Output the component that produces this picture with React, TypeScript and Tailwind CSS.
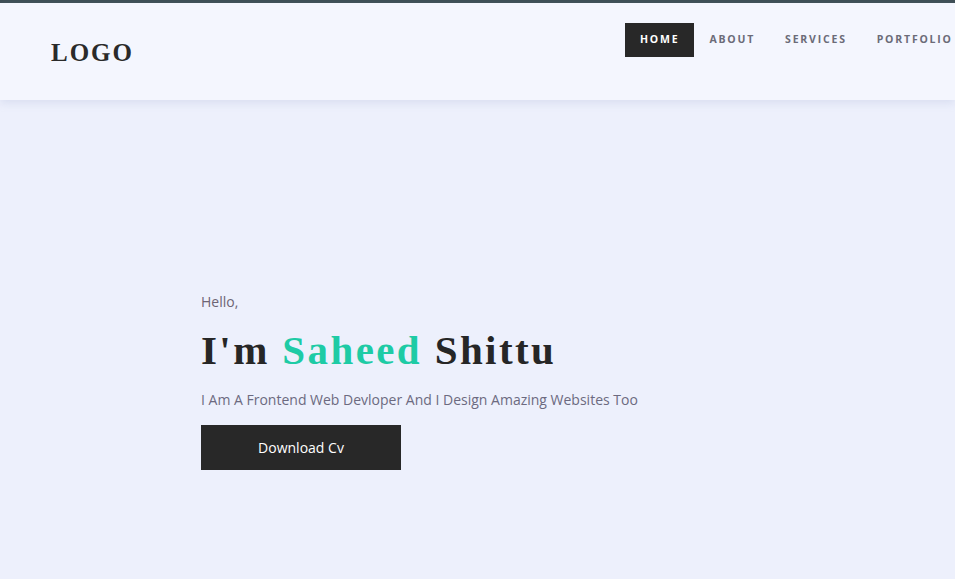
import React from "react";

export default function App() {
  const nav = ["HOME", "ABOUT", "SERVICES", "PORTFOLIO"];
  return (
    <div className="w-[955px] h-[579px] overflow-hidden bg-[#edf0fc] flex flex-col" style={{ fontFamily: '"Open Sans", "Noto Sans", sans-serif' }}>
      <div className="h-[3px] bg-[#3d4d54] shrink-0" />
      <header className="h-[97px] shrink-0 bg-[#f4f6fe] flex items-start shadow-[0_3px_8px_rgba(160,170,210,0.25)] relative z-10">
        <div className="w-[625px] shrink-0 pl-[51px] pt-[37px]">
          <span className="text-[25px] font-bold tracking-[2px] text-[#2a2a2a] leading-none" style={{ fontFamily: '"Liberation Serif", serif' }}>LOGO</span>
        </div>
        <nav className="flex pt-[20px] whitespace-nowrap">
          {nav.map((n, i) => (
            <span
              key={n}
              className={
                "h-[34px] px-[15px] flex items-center text-[10.5px] font-bold tracking-[1.8px] " +
                (i === 0 ? "bg-[#282828] text-white" : "text-[#6b6b78]")
              }
            >
              {n}
            </span>
          ))}
        </nav>
      </header>
      <main className="flex-1 pl-[201px] pt-[192px]">
        <p className="text-[14px] text-[#6e6474] leading-[20px]">Hello,</p>
        <h1 className="mt-[14px] text-[41px] font-bold tracking-[2.4px] leading-[48px] text-[#262626]" style={{ fontFamily: '"Liberation Serif", serif' }}>
          I'm <span className="text-[#1ecba5]">Saheed</span> Shittu
        </h1>
        <p className="mt-[16px] text-[14px] text-[#6c6a80] leading-[20px]">I Am A Frontend Web Devloper And I Design Amazing Websites Too</p>
        <button className="mt-[15px] w-[200px] h-[45px] bg-[#282828] text-white text-[14px]">Download Cv</button>
      </main>
    </div>
  );
}
